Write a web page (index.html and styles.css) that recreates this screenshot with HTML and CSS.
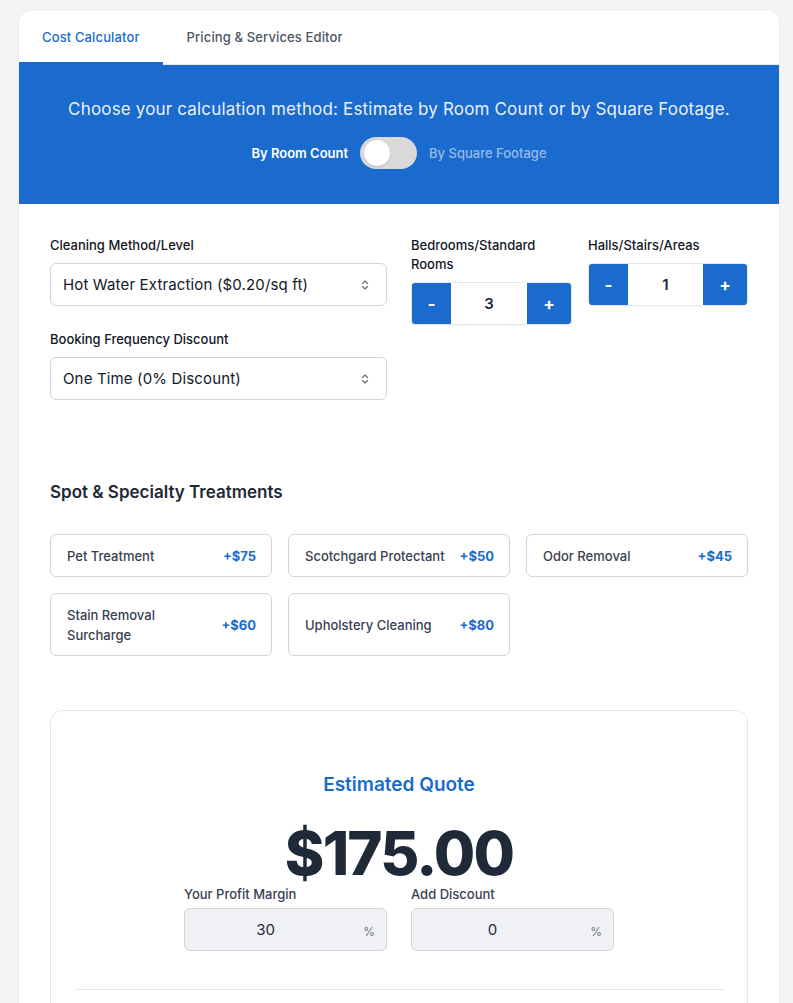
FILE: index.html
```html
<!DOCTYPE html>
<html lang="en">
<head>
<meta charset="utf-8">
<title>Cost Calculator</title>
<link rel="stylesheet" href="styles.css">
</head>
<body>
<div class="card">
  <nav class="tabs">
    <div class="tab active">Cost Calculator</div>
    <div class="tab">Pricing &amp; Services Editor</div>
  </nav>

  <section class="banner">
    <p class="banner-text">Choose your calculation method: Estimate by Room Count or by Square Footage.</p>
    <div class="mode-row">
      <span class="mode on">By Room Count</span>
      <span class="switch"><span class="knob"></span></span>
      <span class="mode off">By Square Footage</span>
    </div>
  </section>

  <section class="content">
    <div class="form-row">
      <div class="col-main">
        <div class="field">
          <label class="label">Cleaning Method/Level</label>
          <div class="select">
            <span>Hot Water Extraction ($0.20/sq ft)</span>
            <svg class="chev" width="12" height="14" viewBox="0 0 12 14"><path d="M3.5 5.5 L6 3 L8.5 5.5 M3.5 8.5 L6 11 L8.5 8.5" fill="none" stroke="#6b7280" stroke-width="1.3" stroke-linecap="round" stroke-linejoin="round"/></svg>
          </div>
        </div>
        <div class="field">
          <label class="label">Booking Frequency Discount</label>
          <div class="select">
            <span>One Time (0% Discount)</span>
            <svg class="chev" width="12" height="14" viewBox="0 0 12 14"><path d="M3.5 5.5 L6 3 L8.5 5.5 M3.5 8.5 L6 11 L8.5 8.5" fill="none" stroke="#6b7280" stroke-width="1.3" stroke-linecap="round" stroke-linejoin="round"/></svg>
          </div>
        </div>
      </div>
      <div class="col-side">
        <div class="field">
          <label class="label">Bedrooms/Standard Rooms</label>
          <div class="stepper">
            <span class="step minus">-</span>
            <span class="step-val">3</span>
            <span class="step plus">+</span>
          </div>
        </div>
      </div>
      <div class="col-side">
        <div class="field">
          <label class="label">Halls/Stairs/Areas</label>
          <div class="stepper">
            <span class="step minus">-</span>
            <span class="step-val">1</span>
            <span class="step plus">+</span>
          </div>
        </div>
      </div>
    </div>

    <h2 class="section-title">Spot &amp; Specialty Treatments</h2>
    <div class="treatments">
      <div class="treat"><span class="t-name">Pet Treatment</span><span class="t-price">+$75</span></div>
      <div class="treat"><span class="t-name">Scotchgard Protectant</span><span class="t-price">+$50</span></div>
      <div class="treat"><span class="t-name">Odor Removal</span><span class="t-price">+$45</span></div>
      <div class="treat"><span class="t-name">Stain Removal Surcharge</span><span class="t-price">+$60</span></div>
      <div class="treat"><span class="t-name">Upholstery Cleaning</span><span class="t-price">+$80</span></div>
    </div>

    <div class="quote">
      <h3 class="quote-title">Estimated Quote</h3>
      <div class="quote-amount">$175.00</div>
      <div class="adjust">
        <div class="adj-field">
          <label class="adj-label">Your Profit Margin</label>
          <div class="pct-input"><span class="pct-val">30</span><span class="pct">%</span></div>
        </div>
        <div class="adj-field">
          <label class="adj-label">Add Discount</label>
          <div class="pct-input"><span class="pct-val">0</span><span class="pct">%</span></div>
        </div>
      </div>
      <div class="divider"></div>
      <div class="quote-foot"></div>
    </div>
  </section>
</div>
</body>
</html>
```

FILE: styles.css
```css
* { box-sizing: border-box; }

body {
  margin: 0;
  padding: 11px 14px 40px 19px;
  background: #f3f4f6;
  font-family: Inter, "Noto Sans", "Liberation Sans", sans-serif;
  color: #111827;
}

.card {
  width: 760px;
  background: #ffffff;
  border-radius: 12px;
  overflow: hidden;
  box-shadow: 0 1px 3px rgba(0, 0, 0, 0.06);
}

.tabs {
  display: flex;
  border-bottom: 1px solid #e5e7eb;
}

.tab {
  height: 54px;
  padding: 0 23px 0 23px;
  margin-bottom: -1px;
  display: flex;
  align-items: center;
  font-size: 13px;
  font-weight: 500;
  letter-spacing: 0.01em;
  color: #4b5563;
  border-bottom: 3px solid transparent;
}

.tab + .tab { padding-left: 24px; }

.tab.active {
  color: #1a6bcd;
  border-bottom-color: #1a6bcd;
}

.banner {
  background: #1a6bcd;
  padding: 30px 24px 35px;
  text-align: center;
}

.banner-text {
  margin: 0;
  font-size: 17px;
  line-height: 28px;
  letter-spacing: 0.01em;
  color: rgba(255, 255, 255, 0.93);
}

.mode-row {
  margin-top: 14px;
  display: flex;
  justify-content: center;
  align-items: center;
  gap: 12px;
  font-size: 13px;
}

.mode.on { color: #ffffff; font-weight: 600; }
.mode.off { color: rgba(255, 255, 255, 0.55); font-weight: 500; }

.switch {
  width: 57px;
  height: 32px;
  border-radius: 16px;
  background: #d9d9d9;
  display: flex;
  align-items: center;
  padding-left: 4px;
}

.knob {
  width: 26px;
  height: 26px;
  border-radius: 50%;
  background: #ffffff;
  box-shadow: 0 1px 2px rgba(0, 0, 0, 0.15);
}

.content {
  padding: 32px 31px 0;
}

.form-row {
  display: flex;
}

.col-main {
  flex: 0 0 337px;
  display: flex;
  flex-direction: column;
  gap: 24px;
  margin-right: 24px;
}

.col-side {
  flex: 0 0 161px;
}

.col-side + .col-side {
  margin-left: 16px;
  flex-basis: 160px;
}

.field {
  display: flex;
  flex-direction: column;
}

.label {
  font-size: 13px;
  line-height: 19px;
  font-weight: 500;
  color: #111827;
  margin-bottom: 8px;
}

.select {
  height: 43px;
  border: 1px solid #d1d5db;
  border-radius: 6px;
  padding: 0 15px 0 12px;
  display: flex;
  align-items: center;
  justify-content: space-between;
  font-size: 15px;
  letter-spacing: 0.01em;
  color: #111827;
}

.stepper {
  height: 43px;
  display: flex;
  border: 1px solid #e5e7eb;
  border-radius: 4px;
  overflow: hidden;
  box-shadow: 0 1px 2px rgba(0, 0, 0, 0.05);
}

.step {
  background: #1a6bcd;
  color: #ffffff;
  font-weight: 700;
  font-size: 17px;
  display: flex;
  align-items: center;
  justify-content: center;
}

.step.minus { width: 39px; }
.step.plus { width: 44px; }

.step-val {
  flex: 1;
  display: flex;
  align-items: center;
  justify-content: center;
  font-size: 15px;
  font-weight: 600;
  color: #1f2937;
}

.section-title {
  margin: 78px 0 0;
  font-size: 17px;
  line-height: 28px;
  font-weight: 600;
  color: #1f2937;
}

.treatments {
  margin-top: 28px;
  display: grid;
  grid-template-columns: repeat(3, 1fr);
  column-gap: 16px;
  row-gap: 16px;
}

.treat {
  border: 1px solid #d1d5db;
  border-radius: 6px;
  padding: 11px 15px 10px 16px;
  display: flex;
  align-items: center;
  justify-content: space-between;
  font-size: 13px;
  line-height: 20px;
}

.t-name {
  color: #374151;
  font-weight: 500;
}

.t-price {
  margin-left: 8px;
  color: #1a6bcd;
  font-weight: 700;
  white-space: nowrap;
}

.quote {
  margin-top: 54px;
  border: 1px solid #e5e7eb;
  border-radius: 12px;
  padding: 60px 23px 0;
  text-align: center;
}

.quote-title {
  margin: 0;
  font-size: 19px;
  line-height: 28px;
  font-weight: 600;
  color: #1a6bcd;
}

.quote-amount {
  margin-top: 26px;
  font-size: 60px;
  line-height: 56px;
  font-weight: 800;
  letter-spacing: -0.03em;
  color: #1f2937;
}

.adjust {
  width: 430px;
  margin: 3px auto 0;
  display: grid;
  grid-template-columns: 1fr 1fr;
  column-gap: 24px;
  text-align: left;
}

.adj-label {
  display: block;
  font-size: 13px;
  line-height: 20px;
  font-weight: 500;
  color: #374151;
  margin-bottom: 4px;
}

.pct-input {
  position: relative;
  height: 43px;
  background: #f0f1f4;
  border: 1px solid #d1d5db;
  border-radius: 6px;
  padding-right: 40px;
  display: flex;
  align-items: center;
  justify-content: center;
}

.pct-val {
  font-size: 15px;
  color: #1f2937;
}

.pct {
  position: absolute;
  right: 11px;
  top: 50%;
  transform: translateY(-40%);
  font-size: 12px;
  color: #6b7280;
}

.divider {
  margin-top: 38px;
  border-top: 1px solid #e5e7eb;
}

.quote-foot {
  height: 120px;
}
```
